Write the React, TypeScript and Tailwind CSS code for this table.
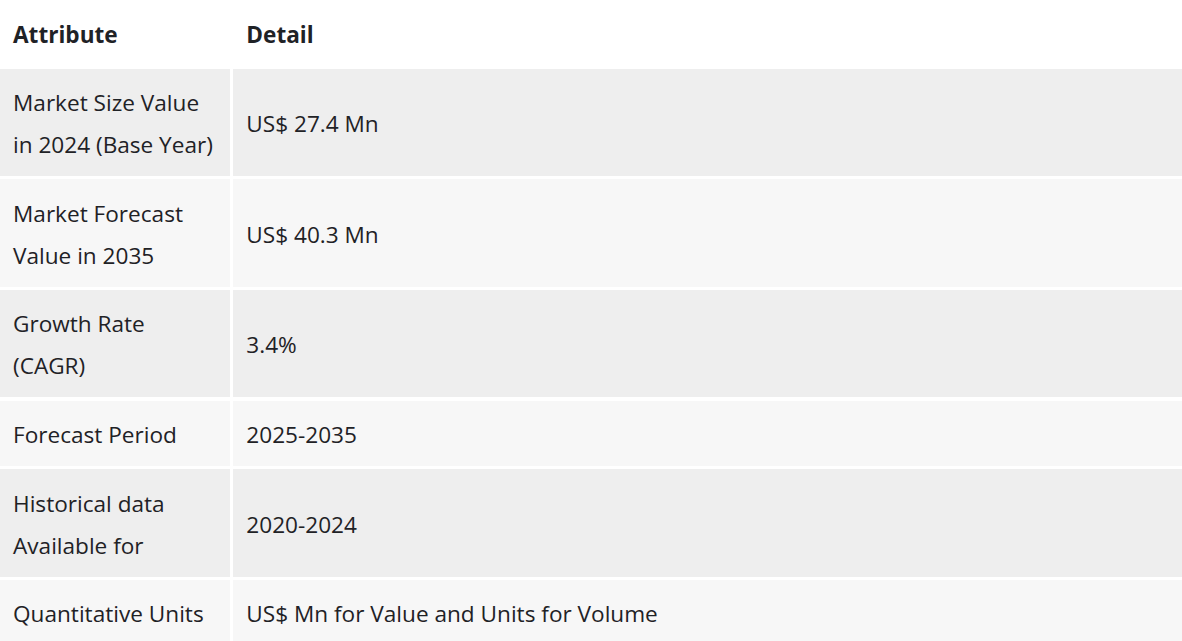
import React from "react";

interface Row {
  attribute: string;
  detail: string;
}

const rows: Row[] = [
  { attribute: "Market Size Value in 2024 (Base Year)", detail: "US$ 27.4 Mn" },
  { attribute: "Market Forecast Value in 2035", detail: "US$ 40.3 Mn" },
  { attribute: "Growth Rate (CAGR)", detail: "3.4%" },
  { attribute: "Forecast Period", detail: "2025-2035" },
  { attribute: "Historical data Available for", detail: "2020-2024" },
  { attribute: "Quantitative Units", detail: "US$ Mn for Value and Units for Volume" },
];

const cell = "px-[13px] pt-[13.5px] pb-[9.83px] leading-[42px] flex items-center";

const App: React.FC = () => (
  <div
    className="w-[1182px] h-[641px] overflow-hidden bg-white text-[22.6px] text-[#1f2226]"
    style={{ fontFamily: '"Open Sans", "Noto Sans", sans-serif' }}
  >
    <div className="grid grid-cols-[230px_1fr] gap-[3.33px]">
      <div className={`${cell} font-bold`}>Attribute</div>
      <div className={`${cell} font-bold`}>Detail</div>
      {rows.map((row, index) => {
        const bg = index % 2 === 0 ? "bg-[#eeeeee]" : "bg-[#f7f7f7]";
        return (
          <React.Fragment key={index}>
            <div className={`${cell} ${bg}`}>{row.attribute}</div>
            <div className={`${cell} ${bg}`}>{row.detail}</div>
          </React.Fragment>
        );
      })}
    </div>
  </div>
);

export default App;
